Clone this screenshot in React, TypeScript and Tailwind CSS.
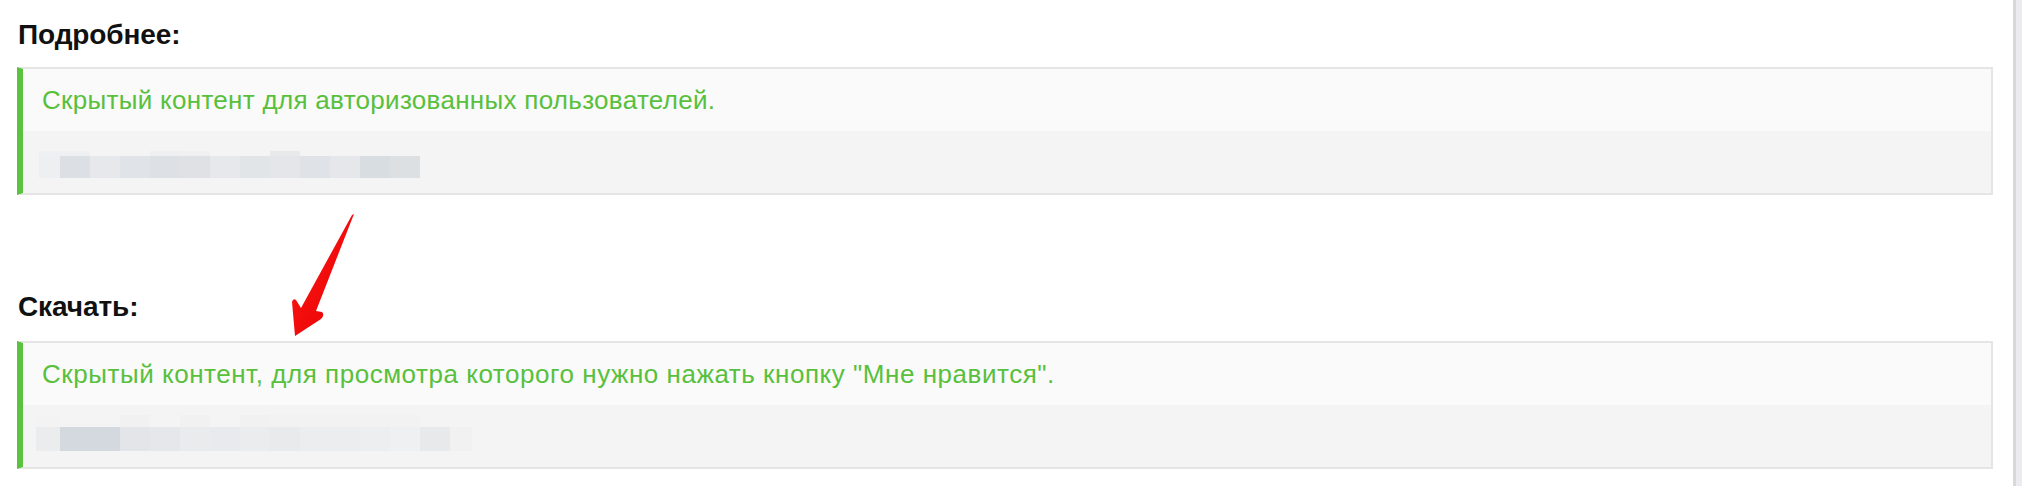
type Cell = { w: string; top: string; main: string };

const blurA: Cell[] = [
  { w: "w-[21px]", top: "bg-[#eff0f2]", main: "bg-[#eeeff1]" },
  { w: "w-[30px]", top: "bg-[#eff0f2]", main: "bg-[#dcdfe3]" },
  { w: "w-[30px]", top: "bg-transparent", main: "bg-[#e7e8eb]" },
  { w: "w-[30px]", top: "bg-transparent", main: "bg-[#e0e3e7]" },
  { w: "w-[30px]", top: "bg-[#eeeff0]", main: "bg-[#dde0e4]" },
  { w: "w-[30px]", top: "bg-[#f0f0f2]", main: "bg-[#dfe1e5]" },
  { w: "w-[30px]", top: "bg-transparent", main: "bg-[#e7e8eb]" },
  { w: "w-[30px]", top: "bg-transparent", main: "bg-[#e2e5e8]" },
  { w: "w-[30px]", top: "bg-[#e8e9eb]", main: "bg-[#e5e6e9]" },
  { w: "w-[30px]", top: "bg-transparent", main: "bg-[#dfe2e6]" },
  { w: "w-[30px]", top: "bg-transparent", main: "bg-[#e6e7ea]" },
  { w: "w-[30px]", top: "bg-transparent", main: "bg-[#d8dde1]" },
  { w: "w-[30px]", top: "bg-transparent", main: "bg-[#dce0e3]" },
];

const blurB: Cell[] = [
  { w: "w-[24px]", top: "bg-[#f3f3f4]", main: "bg-[#ebecee]" },
  { w: "w-[30px]", top: "bg-transparent", main: "bg-[#d4d9e0]" },
  { w: "w-[30px]", top: "bg-transparent", main: "bg-[#d4d9e0]" },
  { w: "w-[30px]", top: "bg-[#f1f1f2]", main: "bg-[#e3e5e8]" },
  { w: "w-[30px]", top: "bg-transparent", main: "bg-[#e6e7ea]" },
  { w: "w-[30px]", top: "bg-[#f1f1f2]", main: "bg-[#eaebed]" },
  { w: "w-[30px]", top: "bg-transparent", main: "bg-[#e9eaed]" },
  { w: "w-[30px]", top: "bg-[#f1f1f2]", main: "bg-[#ebecee]" },
  { w: "w-[30px]", top: "bg-[#f2f2f3]", main: "bg-[#e9eaec]" },
  { w: "w-[30px]", top: "bg-[#f2f2f3]", main: "bg-[#ecedef]" },
  { w: "w-[30px]", top: "bg-[#f2f2f3]", main: "bg-[#ecedef]" },
  { w: "w-[30px]", top: "bg-[#f2f2f3]", main: "bg-[#edeef0]" },
  { w: "w-[30px]", top: "bg-[#f2f2f3]", main: "bg-[#eff0f1]" },
  { w: "w-[30px]", top: "bg-transparent", main: "bg-[#e8e9eb]" },
  { w: "w-[22px]", top: "bg-transparent", main: "bg-[#f1f1f2]" },
];

function Blur({ cells, topH, mainH }: { cells: Cell[]; topH: string; mainH: string }) {
  return (
    <div className="flex">
      {cells.map((c, i) => (
        <div key={i} className={`flex flex-col ${c.w}`}>
          <div className={`${topH} ${c.top}`} />
          <div className={`${mainH} ${c.main}`} />
        </div>
      ))}
    </div>
  );
}

interface HiddenBoxProps {
  text: string;
  tracking: string;
  children: React.ReactNode;
}

function HiddenBox({ text, tracking, children }: HiddenBoxProps) {
  return (
    <div className="border-2 border-[#e5e5e5] border-l-[6px] border-l-[#5bc23f]">
      <div
        className={`flex h-[62px] items-center bg-[#fafafa] pl-[19px] text-[26px] text-[#58c03c] ${tracking}`}
      >
        {text}
      </div>
      <div className="h-[62px] bg-[#f4f4f4]">{children}</div>
    </div>
  );
}

function Arrow() {
  return (
    <svg
      className="pointer-events-none absolute left-[280px] top-[205px]"
      width="90"
      height="140"
      viewBox="0 0 90 140"
    >
      <defs>
        <linearGradient id="ar" x1="0" y1="0" x2="1" y2="1">
          <stop offset="0" stopColor="#ff1a1a" />
          <stop offset="1" stopColor="#e60000" />
        </linearGradient>
      </defs>
      <path
        d="M74 9 L36 106 L42 107 Q45 110 41 114 L15 131 L12 97 Q13 93 16 95 L21 103 L72 10 Z"
        fill="url(#ar)"
      />
    </svg>
  );
}

export default function App() {
  return (
    <div className="flex min-h-[486px] bg-white font-['Liberation_Sans',Arial,Helvetica,sans-serif]">
      <div className="relative flex-1 pl-[17px] pr-[20px]">
        <h3 className="mt-[21px] pl-px text-[28px] font-bold leading-[28px] tracking-[-0.1px] text-[#111]">
          Подробнее:
        </h3>
        <div className="mt-[18px]">
          <HiddenBox
            text="Скрытый контент для авторизованных пользователей."
            tracking="tracking-[0.3px]"
          >
            <div className="pl-[16px] pt-[20px]">
              <Blur cells={blurA} topH="h-[5px]" mainH="h-[22px]" />
            </div>
          </HiddenBox>
        </div>
        <h3 className="mt-[98px] pl-px text-[28px] font-bold leading-[28px] tracking-[-0.1px] text-[#111]">
          Скачать:
        </h3>
        <div className="mt-[20px]">
          <HiddenBox
            text={'Скрытый контент, для просмотра которого нужно нажать кнопку "Мне нравится".'}
            tracking="tracking-[0.54px]"
          >
            <div className="pl-[13px] pt-[10px]">
              <Blur cells={blurB} topH="h-[12px]" mainH="h-[24px]" />
            </div>
          </HiddenBox>
        </div>
        <Arrow />
      </div>
      <div className="w-[9px] border-l-[3px] border-[#d8d8db] bg-[#ececf0]" />
    </div>
  );
}
